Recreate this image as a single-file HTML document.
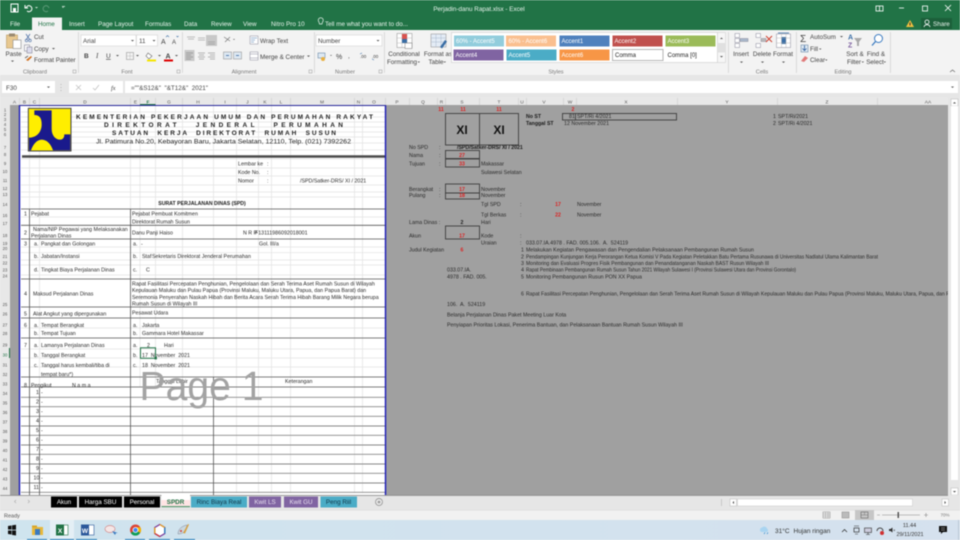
<!DOCTYPE html>
<html><head><meta charset="utf-8"><title>Perjadin-danu Rapat.xlsx - Excel</title>
<style>
html,body{margin:0;padding:0;width:960px;height:540px;overflow:hidden;background:#f3f3f3}
svg{display:block;position:absolute;left:0;top:0;filter:blur(.4px)}
text{font-family:"Liberation Sans",sans-serif;white-space:pre}
.r{font-size:6.3px;fill:#444}
.g{font-size:5.6px;fill:#777;text-anchor:middle}
.w{font-size:6.3px;fill:#e8f3ec}
.c{font-size:4.8px;fill:#555;text-anchor:middle}
.h{font-size:4.2px;fill:#555;text-anchor:middle}
.t{font-size:5.3px;fill:#2a2a2a}
.b{font-size:5.2px;fill:#1a1a1a;font-weight:bold}
.x{font-size:5.2px;fill:#d22;font-weight:bold;text-anchor:middle}
.s{font-size:6px;fill:#fff}
.e{font-size:6.5px;font-weight:bold;fill:#222;}
.m{text-anchor:middle}
</style></head><body>
<svg width="960" height="540" viewBox="0 0 960 540" xmlns="http://www.w3.org/2000/svg">
<!-- title bar -->
<rect width="960" height="30" fill="#217346"/>
<rect x="11" y="4" width="7" height="8" fill="none" stroke="#fff" stroke-width="1"/><rect x="13" y="8" width="3" height="4" fill="#fff"/>
<path d="M26 8a3 3 0 1 1 1 3M25 5v3h3" fill="none" stroke="#fff" stroke-width="1"/><path d="M35 7h3l-1.500 1.500z" fill="#cfe3d6"/>
<path d="M49 8a3 3 0 1 0-1 3" fill="none" stroke="#5d9a78" stroke-width="1"/><path d="M62 7h2l-1 1z" fill="#cfe3d6"/>
<rect x="62" y="6" width="3" height=".8" fill="#cfe3d6"/>
<text class="w m" x="479" y="11">Perjadin-danu Rapat.xlsx - Excel</text>
<rect x="876" y="6" width="7" height="5" fill="none" stroke="#fff" stroke-width=".8"/><path d="M879.500 6v5" stroke="#fff" stroke-width=".8"/>
<path d="M899 8h5" stroke="#fff" stroke-width=".8"/>
<rect x="922.500" y="6" width="5" height="5" fill="none" stroke="#fff" stroke-width=".8"/>
<path d="M945 5l6 6M951 5l-6 6" stroke="#fff" stroke-width=".8"/>
<!-- tabs -->
<rect x="32" y="17.500" width="30" height="13" fill="#f3f3f3"/>
<text class="w" x="10" y="26">File</text>
<text class="r" x="38" y="26" style="fill:#217346">Home</text>
<text class="w" x="69" y="26">Insert</text>
<text class="w" x="98" y="26">Page Layout</text>
<text class="w" x="145" y="26">Formulas</text>
<text class="w" x="184" y="26">Data</text>
<text class="w" x="211" y="26">Review</text>
<text class="w" x="243" y="26">View</text>
<text class="w" x="271" y="26">Nitro Pro 10</text>
<path d="M319 22a2.500 2.500 0 1 1 3.500 0l-.5 2h-2.500z" fill="none" stroke="#e8f3ec" stroke-width=".7"/>
<text class="w" x="325" y="26">Tell me what you want to do...</text>
<path d="M910 20l4 7h-8z" fill="#f0c040"/><rect x="909.500" y="22.500" width="1" height="3" fill="#333"/>
<rect x="921" y="18" width="31" height="11" fill="#1c5f3a"/>
<circle cx="927" cy="22" r="2" fill="none" stroke="#fff" stroke-width=".8"/><path d="M924 27c.5-3 5.500-3 6 0" fill="none" stroke="#fff" stroke-width=".8"/>
<text class="w" x="933" y="26">Share</text>
<!-- ribbon -->
<rect y="30" width="960" height="45" fill="#f3f3f3"/>
<g fill="#d4d4d4"><rect x="78" y="32" width=".8" height="41"/><rect x="182" y="32" width=".8" height="41"/><rect x="314" y="32" width=".8" height="41"/><rect x="384" y="32" width=".8" height="41"/><rect x="728" y="32" width=".8" height="41"/><rect x="796" y="32" width=".8" height="41"/><rect x="890" y="32" width=".8" height="41"/></g>
<!-- clipboard -->
<rect x="6.500" y="35" width="11" height="13" fill="#e8c890" stroke="#b89860" stroke-width=".6"/><rect x="9" y="33.500" width="6" height="3" fill="#9a8a70"/><rect x="13" y="40" width="8" height="8.500" fill="#fff" stroke="#888" stroke-width=".6"/>
<text class="r" x="5.500" y="56">Paste</text><path d="M11 60.500h3l-1.500 1.500z" fill="#555"/>
<path d="M26 34l4 6M30 34l-4 6" stroke="#5577aa" stroke-width=".8"/><circle cx="26.500" cy="40.500" r="1.300" fill="none" stroke="#5577aa" stroke-width=".6"/><circle cx="30" cy="40.500" r="1.300" fill="none" stroke="#5577aa" stroke-width=".6"/>
<text class="r" x="34" y="39">Cut</text>
<rect x="24.500" y="45" width="5" height="6" fill="#fff" stroke="#889" stroke-width=".6"/><rect x="27" y="47" width="5" height="6" fill="#dde" stroke="#889" stroke-width=".6"/>
<text class="r" x="34" y="51">Copy</text><path d="M52 48h3l-1.500 1.500z" fill="#555"/>
<path d="M26 60l5-4 1 1-4 4z" fill="#d07020"/><path d="M25 58l3-2" stroke="#666" stroke-width="1"/>
<text class="r" x="34" y="62">Format Painter</text>
<text class="g" x="35" y="73.500">Clipboard</text><rect x="73" y="70" width="3" height="3" fill="none" stroke="#999" stroke-width=".5"/>
<!-- font -->
<rect x="81" y="35" width="55" height="11" fill="#fff" stroke="#ccc" stroke-width=".5"/><rect x="136.500" y="35" width="21" height="11" fill="#fff" stroke="#ccc" stroke-width=".5"/>
<text class="r" x="83" y="43">Arial</text><text class="r" x="139" y="43">11</text>
<path d="M131 40h3l-1.500 1.500zM152.500 40h3l-1.500 1.500z" fill="#555"/>
<text class="r" x="161" y="44" style="font-size:7px">A</text><text class="r" x="172" y="44" style="font-size:6px">A</text>
<path d="M166 37l1.500-1.500 1.500 1.500" fill="none" stroke="#3a6ea5" stroke-width=".6"/><path d="M176.500 36l1 1 1-1" fill="none" stroke="#3a6ea5" stroke-width=".6"/>
<text class="r" x="84" y="58" style="font-weight:bold;font-size:6.500px">B</text>
<text class="r" x="96" y="58" style="font-style:italic;font-family:'Liberation Serif';font-size:7px">I</text>
<text class="r" x="106" y="58" style="font-size:6.500px;text-decoration:underline">U</text>
<path d="M116 55h3l-1.500 1.500z" fill="#555"/>
<rect x="126.500" y="52.500" width="7" height="7" fill="none" stroke="#999" stroke-width=".6"/><path d="M130 52.500v7M126.500 56h7" stroke="#bbb" stroke-width=".5"/>
<path d="M136 55h3l-1.500 1.500z" fill="#555"/>
<path d="M148 53l4 3-3 3-3-3z" fill="#fff" stroke="#666" stroke-width=".6"/><rect x="147" y="59.500" width="9" height="2" fill="#f5e500"/><path d="M158 55h3l-1.500 1.500z" fill="#555"/>
<text class="r" x="165.500" y="58.500" style="font-size:7px;font-weight:bold">A</text><rect x="164" y="59.500" width="9" height="2" fill="#d00"/><path d="M175 55h3l-1.500 1.500z" fill="#555"/>
<text class="g" x="127" y="73.500">Font</text><rect x="177" y="70" width="3" height="3" fill="none" stroke="#999" stroke-width=".5"/>
<!-- alignment -->
<rect x="206" y="35" width="11" height="11" fill="#c8c8c8"/>
<path d="M187 37h8M188 39h6M198 38h7M198 40h7M208 42h7M208 44h7" stroke="#888" stroke-width=".6"/>
<rect x="184.500" y="50" width="10" height="11" fill="#c8c8c8"/>
<path d="M186 53h7M186 55h5M186 57h7M186 59h5M198 53h7M199 55h5M198 57h7M199 59h5M208 53h7M210 55h5M208 57h7M210 59h5" stroke="#777" stroke-width=".6"/>
<path d="M224 37l6 4M225 42l5-5" stroke="#777" stroke-width=".7"/><path d="M233 39h2l-1 1z" fill="#555"/>
<rect x="223.500" y="52" width="8" height="7" fill="#dde8f2" stroke="#888" stroke-width=".5"/><rect x="233.500" y="52" width="8" height="7" fill="#dde8f2" stroke="#888" stroke-width=".5"/><path d="M229 55.500h-3M236 55.500h3" stroke="#2a5a9a" stroke-width=".8"/>
<rect x="250" y="36" width="8" height="8" fill="#fff" stroke="#889" stroke-width=".5"/><path d="M251 38h6M251 40h4M251 42h3" stroke="#4477aa" stroke-width=".6"/>
<text class="r" x="260" y="43">Wrap Text</text>
<rect x="250" y="52" width="8" height="8" fill="#fff" stroke="#889" stroke-width=".5"/><path d="M250 54h8M250 58h8" stroke="#889" stroke-width=".5"/>
<text class="r" x="260" y="59">Merge &amp; Center</text><path d="M307 55.500h3l-1.500 1.500z" fill="#555"/>
<text class="g" x="244" y="73.500">Alignment</text><rect x="309" y="70" width="3" height="3" fill="none" stroke="#999" stroke-width=".5"/>
<!-- number -->
<rect x="316" y="35" width="66" height="11" fill="#fff" stroke="#ccc" stroke-width=".5"/>
<text class="r" x="318" y="43">Number</text><path d="M376.500 40h3l-1.500 1.500z" fill="#555"/>
<rect x="318" y="53" width="7" height="5" fill="#dde8f2" stroke="#579" stroke-width=".5"/><circle cx="323" cy="59" r="2" fill="#e8b040"/><path d="M330 55h2l-1 1z" fill="#555"/>
<text class="r" x="336" y="59" style="font-size:7px">%</text><text class="r" x="348" y="58">,</text>
<text class="r" x="360" y="58" style="font-size:4.500px">.00</text><text class="r" x="372" y="58" style="font-size:4.500px">.00</text>
<path d="M360 54l2-1M372 59l2 1" stroke="#4477aa" stroke-width=".6"/>
<text class="g" x="345" y="73.500">Number</text><rect x="379" y="70" width="3" height="3" fill="none" stroke="#999" stroke-width=".5"/>
<!-- conditional -->
<rect x="397" y="33.500" width="15" height="14" fill="#fff" stroke="#8a8a8a" stroke-width=".5"/><path d="M397 38h15M397 43h15M402 34v14M407 34v14" stroke="#bbb" stroke-width=".5"/><rect x="402" y="34" width="5" height="5" fill="#d9534f"/><rect x="402" y="39" width="5" height="4" fill="#3a6ea5"/><rect x="405" y="43" width="7" height="5.500" fill="#fff" stroke="#777" stroke-width=".5"/>
<text class="r m" x="404" y="56">Conditional</text><text class="r m" x="402" y="64">Formatting</text><path d="M417.500 61.500h2.500l-1.200 1.300z" fill="#555"/>
<rect x="431" y="34" width="15" height="13" fill="#e4ecf6" stroke="#8a8a8a" stroke-width=".5"/><path d="M431 38h15M431 42h15M436 34v13M441 34v13" stroke="#a9b9cc" stroke-width=".5"/><path d="M440 47l5-7 2 1.500-5 7z" fill="#3a6ea5"/>
<text class="r m" x="438" y="56">Format as</text><text class="r m" x="436" y="64">Table</text><path d="M443.500 61.500h2.500l-1.200 1.300z" fill="#555"/>
<!-- gallery -->
<rect x="451.500" y="32.500" width="266" height="30" fill="#fff" stroke="#ccc" stroke-width=".6"/>
<rect x="454" y="35.500" width="50" height="11" fill="#92cddc"/><text class="s" x="456" y="43">60% - Accent5</text>
<rect x="506" y="35.500" width="50" height="11" fill="#fabf8f"/><text class="s" x="508.500" y="43">60% - Accent6</text>
<rect x="559.500" y="35.500" width="50" height="11" fill="#4f81bd"/><text class="s" x="561.500" y="43">Accent1</text>
<rect x="612.500" y="35.500" width="50" height="11" fill="#c0504d"/><text class="s" x="614.500" y="43">Accent2</text>
<rect x="665.500" y="35.500" width="50" height="11" fill="#9bbb59"/><text class="s" x="667.500" y="43">Accent3</text>
<rect x="453.500" y="49.500" width="50" height="11" fill="#8064a2"/><text class="s" x="455.500" y="57">Accent4</text>
<rect x="506.500" y="49.500" width="50" height="11" fill="#4bacc6"/><text class="s" x="508.500" y="57">Accent5</text>
<rect x="559.500" y="49.500" width="50" height="11" fill="#f79646"/><text class="s" x="561.500" y="57">Accent6</text>
<rect x="612.500" y="49.500" width="50.500" height="11" fill="#fff" stroke="#b5b5b5" stroke-width="1"/><text class="s" x="615" y="57" style="fill:#222">Comma</text>
<text class="s" x="667.500" y="57" style="fill:#222">Comma [0]</text>
<rect x="717.500" y="32.500" width="8" height="30" fill="#f6f6f6" stroke="#ccc" stroke-width=".5"/><rect x="718" y="43" width="7" height="9.500" fill="#e0e0e0"/>
<path d="M720 39l1.500-1.500 1.500 1.500zM720 56h3l-1.500 1.500z" fill="#555"/>
<text class="g" x="556" y="73.500">Styles</text>
<!-- cells -->
<g stroke="#889" stroke-width=".5" fill="#fff"><rect x="735" y="33.500" width="4.500" height="4"/><rect x="735" y="38.500" width="4.500" height="4"/><rect x="735" y="43.500" width="4.500" height="4"/><rect x="740" y="38.500" width="8" height="3" fill="#a9b9cc"/>
<rect x="756" y="33.500" width="4.500" height="4"/><rect x="756" y="43.500" width="4.500" height="4"/><rect x="761" y="38.500" width="5" height="3" fill="#bbb"/>
<rect x="776.500" y="34" width="14" height="13.500"/></g>
<path d="M766 36l6 6M772 36l-6 6" stroke="#d04030" stroke-width="1"/>
<rect x="781.500" y="37" width="4.500" height="7" fill="#3a6ea5"/><path d="M776.500 38h14M776.500 43h14M781.500 34v13.500M786 34v13.500" stroke="#aaa" stroke-width=".4"/><path d="M778 33h11" stroke="#3a6ea5" stroke-width=".8"/>
<text class="r m" x="741" y="56">Insert</text><text class="r m" x="762" y="56">Delete</text><text class="r m" x="783" y="56">Format</text>
<path d="M740 61.500h3l-1.500 1.500zM761 61.500h3l-1.500 1.500zM782 61.500h3l-1.500 1.500z" fill="#555"/>
<text class="g" x="762" y="73.500">Cells</text>
<!-- editing -->
<text x="800" y="42" style="font-size:10px;fill:#444">Σ</text><text class="r" x="810" y="39">AutoSum</text><path d="M840 36h3l-1.500 1.500z" fill="#555"/>
<rect x="801" y="45" width="7" height="7" fill="#dde8f2" stroke="#579" stroke-width=".5"/><path d="M804.500 45.500v5M802.500 48.500l2 2 2-2" fill="none" stroke="#2a5a9a" stroke-width=".8"/><text class="r" x="810" y="51">Fill</text><path d="M819 48.500h2.500l-1.200 1.300z" fill="#555"/>
<path d="M801 61l4-5 3 2-4 4z" fill="#e07a7a"/><text class="r" x="810" y="62">Clear</text><path d="M825 59.500h2.500l-1.200 1.300z" fill="#555"/>
<text x="848" y="39.500" style="font-size:7px;fill:#3a6ea5;font-weight:bold">A</text><text x="848" y="47.500" style="font-size:7px;fill:#8064a2;font-weight:bold">Z</text><path d="M854 38h8l-3 4v4h-2v-4z" fill="#aaa"/>
<circle cx="878.500" cy="38.500" r="4" fill="#fff" stroke="#3a7ac0" stroke-width="1"/><path d="M875.500 41.500l-3.500 4" stroke="#3a7ac0" stroke-width="1.300"/>
<text class="r m" x="855" y="56">Sort &amp;</text><text class="r m" x="854" y="64">Filter</text><path d="M861.500 61.500h2.500l-1.200 1.300z" fill="#555"/>
<text class="r m" x="876" y="56">Find &amp;</text><text class="r m" x="875" y="64">Select</text><path d="M883.500 61.500h2.500l-1.200 1.300z" fill="#555"/>
<text class="g" x="843" y="73.500">Editing</text>
<path d="M950 72l2.500-2 2.500 2" fill="none" stroke="#666" stroke-width=".7"/>
<!-- formula bar -->
<rect y="75" width="960" height="22" fill="#e6e6e6"/>
<rect x="2" y="81" width="53" height="12" fill="#fff"/>
<text class="r" x="6" y="90">F30</text><path d="M47 86.500h3l-1.500 1.500z" fill="#555"/>
<path d="M61 84v1M61 87v1M61 90v1" stroke="#aaa" stroke-width=".7"/>
<rect x="69" y="81" width="54" height="12" fill="#fff"/>
<path d="M76 85l5 5M81 85l-5 5" stroke="#bbb" stroke-width=".7"/><path d="M93 88l2 2 4-5" fill="none" stroke="#bbb" stroke-width=".7"/>
<text class="r" x="111" y="90" style="font-style:italic;font-family:'Liberation Serif'">fx</text>
<rect x="125" y="81" width="833" height="12" fill="#fff"/>
<text class="r" x="131" y="90">=""&amp;S12&amp;"  "&amp;T12&amp;"  2021"</text>
<path d="M951 86.500h3l-1.500 1.500z" fill="#555"/>
<!-- column headers -->
<rect y="97" width="960" height="8.500" fill="#e8e8e8"/>
<path d="M19.500 98v7M29.500 98v7M39.500 98v7M130.500 98v7M140 98v7M155.500 98v7M182.500 98v7M213.500 98v7M236.500 98v7M258.500 98v7M271.500 98v7M290.500 98v7M354.500 98v7M362.500 98v7M385.500 98v7M409.500 98v7M437.500 98v7M445.500 98v7M479.500 98v7M518.500 98v7M526.500 98v7M563.500 98v7M576.500 98v7M677.500 98v7M777.500 98v7M877.500 98v7" stroke="#ccc" stroke-width=".6"/>
<rect x="140" y="104" width="15.500" height="1.200" fill="#217346"/>
<g>
<text class="c" x="14.500" y="103.500">A</text><text class="c" x="24.500" y="103.500">B</text><text class="c" x="34.500" y="103.500">C</text><text class="c" x="85" y="103.500">D</text><text class="c" x="135.500" y="103.500">E</text><text class="c" x="148" y="103.500" style="fill:#217346;font-weight:bold">F</text><text class="c" x="169" y="103.500">G</text><text class="c" x="198" y="103.500">H</text><text class="c" x="225" y="103.500">I</text><text class="c" x="247.500" y="103.500">J</text><text class="c" x="265" y="103.500">K</text><text class="c" x="281" y="103.500">L</text><text class="c" x="322" y="103.500">M</text><text class="c" x="358.500" y="103.500">N</text><text class="c" x="374" y="103.500">O</text><text class="c" x="397" y="103.500">P</text><text class="c" x="423" y="103.500">Q</text><text class="c" x="441.500" y="103.500">R</text><text class="c" x="462" y="103.500">S</text><text class="c" x="499" y="103.500">T</text><text class="c" x="522" y="103.500">U</text><text class="c" x="544" y="103.500">V</text><text class="c" x="570" y="103.500">W</text><text class="c" x="626" y="103.500">X</text><text class="c" x="727" y="103.500">Y</text><text class="c" x="827" y="103.500">Z</text><text class="c" x="928" y="103.500">AA</text>
</g>
<!-- sheet -->
<rect x="0" y="105" width="10" height="390" fill="#e8e8e8"/>
<rect x="10" y="105" width="938" height="390" fill="#a0a0a0"/>
<rect x="19" y="105" width="367" height="390" fill="#fff"/>
<!-- row headers -->
<g>
<text class="h" x="5" y="111.500">1</text><text class="h" x="5" y="116">2</text><text class="h" x="5" y="121">3</text><text class="h" x="5" y="126">4</text><text class="h" x="5" y="131">5</text><text class="h" x="5" y="136">6</text><text class="h" x="5" y="149">7</text><text class="h" x="5" y="156">8</text><text class="h" x="5" y="165">9</text><text class="h" x="5" y="173">10</text><text class="h" x="5" y="182">11</text><text class="h" x="5" y="190">12</text><text class="h" x="5" y="196">13</text><text class="h" x="5" y="206">14</text><text class="h" x="5" y="217">16</text><text class="h" x="5" y="225">17</text><text class="h" x="5" y="237">18</text><text class="h" x="5" y="245">19</text><text class="h" x="5" y="250">20</text><text class="h" x="5" y="258">21</text><text class="h" x="5" y="264.500">22</text><text class="h" x="5" y="271.500">23</text><text class="h" x="5" y="277.500">24</text><text class="h" x="5" y="306">25</text><text class="h" x="5" y="315.500">26</text><text class="h" x="5" y="326.500">27</text><text class="h" x="5" y="335">28</text><text class="h" x="5" y="346.500">29</text><text class="h" x="5" y="356.500" style="fill:#217346">30</text><text class="h" x="5" y="366.500">31</text><text class="h" x="5" y="376">32</text><text class="h" x="5" y="385.500">33</text><text class="h" x="5" y="395">34</text><text class="h" x="5" y="404.500">35</text><text class="h" x="5" y="414">36</text><text class="h" x="5" y="423.500">37</text><text class="h" x="5" y="433">38</text><text class="h" x="5" y="442.500">39</text><text class="h" x="5" y="452">40</text><text class="h" x="5" y="461.500">41</text><text class="h" x="5" y="471">42</text><text class="h" x="5" y="480.500">43</text><text class="h" x="5" y="490">44</text>
</g>
<rect x="9" y="348" width="1" height="10" fill="#217346"/>
<!-- light gridlines -->
<path d="M29.500 105v104M39.500 105v282M130.500 105v104M140 105v282M155.500 105v282M182.500 105v388M213.500 105v272M236.500 105v388M258.500 105v388M271.500 105v388M290.500 105v388M354.500 105v388M362.500 105v388M21 112h364M21 117h364M21 122h364M21 127h364M21 132h364M21 137h364M21 143h364M21 150h364M21 159h364M21 168h364M21 176h364M21 185h364M21 192h364M21 197h364M21 217h364M21 247h364M21 252.700h364M21 260h364M21 265h364M21 275h364M21 328h364M21 349h364M21 358h364M21 367h364" stroke="#e2e2e2" stroke-width=".7" fill="none"/>
<!-- dark lines -->
<path d="M22 156.500h363" stroke="#4a4a4a" stroke-width="2.600"/>
<path d="M21 209h364M21 225.300h364M21 239h364M21 279h364M21 307h364M21 318h364M21 338h364M21 377h364M21 387h364" stroke="#555" stroke-width=".8"/>
<path d="M21 397.300h364M21 406.700h364M21 416.300h364M21 426h364M21 435.300h364M21 445h364M21 454.300h364M21 464h364M21 473.300h364M21 483h364M21 492.300h364" stroke="#888" stroke-width=".9"/>
<path d="M29.500 209v286M39.500 387v108M130.500 209v286M213.500 377v118" stroke="#555" stroke-width=".8"/>
<!-- page border -->
<path d="M19.500 105v390M385.500 105v390" stroke="#1a1ab8" stroke-width="1.400"/><rect x="19" y="105" width="367" height="1" fill="#26269a"/>
<!-- logo -->
<g transform="translate(25 105) scale(.3333)">
<rect x="10" y="10" width="128" height="128" fill="#ffee00" stroke="#444" stroke-width="3"/>
<path d="M28 16H80V72C80 92 92 104 104 104C114 104 118 98 118 88H136V136H84C78 118 66 104 50 104C36 104 24 118 18 136H12V98C34 98 50 82 50 58C50 40 44 30 28 30Z" fill="#1a1a8c"/>
</g>
<!-- header text -->
<text class="e" x="76" y="119" textLength="297" lengthAdjust="spacing">KEMENTERIAN PEKERJAAN UMUM DAN PERUMAHAN RAKYAT</text>
<text class="e" x="104" y="127" textLength="239" lengthAdjust="spacing">DIREKTORAT   JENDERAL   PERUMAHAN</text>
<text class="e" x="112" y="135" textLength="224" lengthAdjust="spacing">SATUAN  KERJA  DIREKTORAT  RUMAH  SUSUN</text>
<text x="96" y="143.500" textLength="255" lengthAdjust="spacingAndGlyphs" style="font-size:6.400px;fill:#222">Jl. Patimura No.20, Kebayoran Baru, Jakarta Selatan, 12110, Telp. (021) 7392262</text>
<g>
<text class="t" x="238" y="165.500">Lembar ke</text><text class="t" x="267" y="165.500">:</text>
<text class="t" x="238" y="174">Kode No.</text><text class="t" x="267" y="174">:</text>
<text class="t" x="238" y="182.500">Nomor</text><text class="t" x="267" y="182.500">:</text><text class="t" x="300" y="182.500">/SPD/Satker-DRS/ XI / 2021</text>
<text class="b m" x="202" y="205">SURAT PERJALANAN DINAS (SPD)</text>
<text class="t" x="24" y="215.500">1</text><text class="t" x="31" y="215.500">Pejabat</text><text class="t" x="132" y="215.500">Pejabat Pembuat Komitmen</text><text class="t" x="132" y="223.500">Direktorat Rumah Susun</text>
<text class="t" x="33" y="231">Nama/NIP Pegawai yang Melaksanakan</text><text class="t" x="31" y="237.500">Perjalanan Dinas</text><text class="t" x="24" y="234.500">2</text><text class="t" x="132" y="234.500">Danu Panji Haiso</text><text class="t" x="243" y="234.500">N R P</text><text class="t" x="255" y="234.500">F13111986092018001</text>
<text class="t" x="24" y="245.500">3</text><text class="t" x="34" y="245.500">a.</text><text class="t" x="41" y="245.500">Pangkat dan Golongan</text><text class="t" x="133" y="245.500">a.</text><text class="t" x="141" y="245.500">-</text><text class="t" x="259" y="245.500">Gol.</text><text class="t" x="270" y="245.500">III/a</text>
<text class="t" x="34" y="258">b.</text><text class="t" x="41" y="258">Jabatan/Instansi</text><text class="t" x="133" y="258">b.</text><text class="t" x="142" y="258">Staf</text><text class="t" x="152" y="258">Sekretaris Direktorat Jenderal Perumahan</text>
<text class="t" x="34" y="271.500">d.</text><text class="t" x="41" y="271.500">Tingkat Biaya Perjalanan Dinas</text><text class="t" x="133" y="271.500">c.</text><text class="t" x="146" y="271.500">C</text>
<text class="t" x="24" y="295.500">4</text><text class="t" x="33" y="295.500">Maksud Perjalanan Dinas</text>
<text class="t" x="132" y="285.500">Rapat Fasilitasi Percepatan Penghunian, Pengelolaan dan Serah Terima Aset Rumah Susun di Wilayah</text>
<text class="t" x="132" y="292">Kepulauan Maluku dan Pulau Papua (Provinsi Maluku, Maluku Utara, Papua, dan Papua Barat) dan</text>
<text class="t" x="132" y="299">Seremonia Penyerahan Naskah Hibah dan Berita Acara Serah Terima Hibah Barang Milik Negara berupa</text>
<text class="t" x="132" y="305.500">Rumah Susun di Wilayah III</text>
<text class="t" x="24" y="315.500">5</text><text class="t" x="33" y="315.500">Alat Angkut yang dipergunakan</text><text class="t" x="132" y="314.500">Pesawat Udara</text>
<text class="t" x="24" y="327">6</text><text class="t" x="34" y="327">a.</text><text class="t" x="41" y="327">Tempat Berangkat</text><text class="t" x="133" y="327">a.</text><text class="t" x="142" y="327">Jakarta</text>
<text class="t" x="34" y="335">b.</text><text class="t" x="41" y="335">Tempat Tujuan</text><text class="t" x="133" y="335">b.</text><text class="t" x="142" y="335">Gammara Hotel Makassar</text>
<text class="t" x="24" y="347">7</text><text class="t" x="34" y="347">a.</text><text class="t" x="41" y="347">Lamanya Perjalanan Dinas</text><text class="t" x="133" y="347">a.</text><text class="t" x="147" y="347">2</text><text class="t" x="164" y="347">Hari</text>
<text class="t" x="34" y="357">b.</text><text class="t" x="41" y="357">Tanggal Berangkat</text><text class="t" x="133" y="357">b.</text><text class="t" x="142" y="357">17  November  2021</text>
<text class="t" x="34" y="367">c.</text><text class="t" x="41" y="367">Tanggal harus kembali/tiba di</text><text class="t" x="133" y="367">c.</text><text class="t" x="142" y="367">18  November  2021</text>
<text class="t" x="41" y="376">tempat baru*)</text>
<text class="t" x="24" y="387">8</text><text class="t" x="31" y="387">Pengikut</text><text class="t" x="72" y="387">N a m a</text><text class="t" x="156" y="383">Tanggal Lahir</text><text class="t" x="285" y="383">Keterangan</text>
</g>
<g>
<text class="t" x="36" y="394">1</text><text class="t" x="36" y="403.500">2</text><text class="t" x="36" y="413">3</text><text class="t" x="36" y="422.500">4</text><text class="t" x="36" y="432">5</text><text class="t" x="36" y="441.500">6</text><text class="t" x="36" y="451">7</text><text class="t" x="36" y="460.500">8</text><text class="t" x="36" y="470">9</text><text class="t" x="33.500" y="479.500">10</text><text class="t" x="33.500" y="489">11</text>
<text class="t" x="41" y="394">-</text><text class="t" x="41" y="403.500">-</text><text class="t" x="41" y="413">-</text><text class="t" x="41" y="422.500">-</text><text class="t" x="41" y="432">-</text><text class="t" x="41" y="441.500">-</text><text class="t" x="41" y="451">-</text><text class="t" x="41" y="460.500">-</text><text class="t" x="41" y="470">-</text><text class="t" x="41" y="479.500">-</text><text class="t" x="41" y="489">-</text>
</g>
<!-- watermark -->
<text x="139.500" y="400" textLength="124" lengthAdjust="spacingAndGlyphs" style="font-size:41px;fill:#a3a3a3">Page 1</text>
<!-- selected cell -->
<rect x="140.500" y="347.800" width="15" height="10.500" fill="none" stroke="#217346" stroke-width="1"/><rect x="154.500" y="357" width="2.400" height="2.400" fill="#217346"/>
<!-- right gray content -->
<text class="x" x="441" y="111">11</text><text class="x" x="463" y="111">11</text><text class="x" x="499" y="111">11</text><text class="x" x="573" y="111">2</text>
<g fill="none" stroke="#3e3e3e" stroke-width=".9">
<rect x="445.500" y="113.500" width="73" height="31.500"/><path d="M479.500 113.500v31.500"/>
<rect x="562.500" y="113.500" width="114" height="6.500"/><path d="M575.500 113.500v6.500"/>
<rect x="445.500" y="150.500" width="34" height="8"/><rect x="445.500" y="159" width="34" height="8"/>
<rect x="445.500" y="184" width="34" height="9"/><rect x="445.500" y="193" width="34" height="6"/>
<rect x="445.500" y="226" width="34" height="13"/>
</g>
<text x="462" y="134" class="m" style="font-size:12px;font-weight:bold;fill:#111">XI</text><text x="499" y="134" class="m" style="font-size:12px;font-weight:bold;fill:#111">XI</text>
<text class="b" x="526" y="118">No ST</text><text class="b" x="526" y="125">Tanggal ST</text>
<text class="t" x="569" y="118">81</text><text class="t" x="577" y="118">SPT/Ri 4/2021</text><text class="t" x="564" y="125">12 November 2021</text>
<text class="t" x="409" y="149">No SPD</text><text class="t" x="439" y="149">:</text><text class="b" x="457" y="149">/SPD/Satker-DRS/ XI / 2021</text>
<text class="t" x="409" y="157">Nama</text><text class="t" x="439" y="157">:</text><text class="x" x="462" y="157">27</text>
<text class="t" x="409" y="165.500">Tujuan</text><text class="t" x="439" y="165.500">:</text><text class="x" x="462" y="165.500">33</text><text class="t" x="481" y="165.500">Makassar</text><text class="t" x="481" y="174">Sulawesi Selatan</text>
<text class="t" x="409" y="191">Berangkat</text><text class="t" x="439" y="191">:</text><text class="x" x="462" y="191">17</text><text class="t" x="481" y="191">November</text>
<text class="t" x="409" y="197">Pulang</text><text class="t" x="439" y="197">:</text><text class="x" x="462" y="197">18</text><text class="t" x="481" y="197">November</text>
<text class="t" x="481" y="206">Tgl SPD</text><text class="t" x="520" y="206">:</text><text class="x" x="558" y="206">17</text><text class="t" x="577" y="206">November</text>
<text class="t" x="481" y="216.500">Tgl Berkas</text><text class="t" x="520" y="216.500">:</text><text class="x" x="558" y="216.500">22</text><text class="t" x="577" y="216.500">November</text>
<text class="t" x="409" y="224">Lama Dinas :</text><text class="b m" x="462" y="224">2</text><text class="t" x="481" y="224">Hari</text>
<text class="t" x="409" y="237.500">Akun</text><text class="x" x="462" y="237.500">17</text><text class="t" x="481" y="237.500">Kode</text><text class="t" x="520" y="237.500">:</text>
<text class="t" x="481" y="244.500">Uraian</text><text class="t" x="520" y="244.500">:</text><text class="t" x="526" y="244.500">033.07.IA.4978 . FAD. 005.106.  A.  524119</text>
<text class="t" x="409" y="251.500">Judul Kegiatan</text><text class="x" x="462" y="251.500">6</text>
<text class="t" x="521" y="251.500">1</text><text class="t" x="526" y="251.500" textLength="228" lengthAdjust="spacingAndGlyphs">Melakukan Kegiatan Pengawasan dan Pengendalian Pelaksanaan Pembangunan Rumah Susun</text>
<text class="t" x="521" y="258.500">2</text><text class="t" x="526" y="258.500" textLength="352" lengthAdjust="spacingAndGlyphs">Pendampingan Kunjungan Kerja Perorangan Ketua Komisi V Pada Kegiatan Peletakkan Batu Pertama Rusunawa di Universitas Nadlatul Ulama Kalimantan Barat</text>
<text class="t" x="521" y="265">3</text><text class="t" x="526" y="265" textLength="243" lengthAdjust="spacingAndGlyphs">Monitoring dan Evaluasi Progres Fisik Pembangunan dan Penandatanganan Naskah BAST Rusun Wilayah III</text>
<text class="t" x="447" y="271.500">033.07.IA.</text><text class="t" x="521" y="271.500">4</text><text class="t" x="526" y="271.500" textLength="270" lengthAdjust="spacingAndGlyphs">Rapat Pembinaan Pembangunan Rumah Susun Tahun 2021 Wilayah Sulawesi I (Provinsi Sulawesi Utara dan Provinsi Gorontalo)</text>
<text class="t" x="447" y="278.500">4978 . FAD. 005.</text><text class="t" x="521" y="278.500">5</text><text class="t" x="526" y="278.500" textLength="116" lengthAdjust="spacingAndGlyphs">Monitoring Pembangunan Rusun PON XX Papua</text>
<text class="t" x="521" y="295.500">6</text><text class="t" x="526" y="295.500" style="font-size:5.100px">Rapat Fasilitasi Percepatan Penghunian, Pengelolaan dan Serah Terima Aset Rumah Susun di Wilayah Kepulauan Maluku dan Pulau Papua (Provinsi Maluku, Maluku Utara, Papua, dan Papua Barat) dan</text>
<text class="t" x="447" y="306">106.  A.  524119</text>
<text class="t" x="447" y="316.500">Belanja Perjalanan Dinas Paket Meeting Luar Kota</text>
<text class="t" x="447" y="326.500">Penyiapan Prioritas Lokasi, Penerima Bantuan, dan Pelaksanaan Bantuan Rumah Susun Wilayah III</text>
<text class="t" x="773" y="118">1</text><text class="t" x="778" y="118">SPT/Ri/2021</text><text class="t" x="773" y="125">2</text><text class="t" x="778" y="125">SPT/Ri 4/2021</text>
<!-- v scrollbar -->
<rect x="948" y="97" width="12" height="398" fill="#e6e6e6"/>
<rect x="951" y="99" width="7" height="7" fill="#fff" stroke="#aaa" stroke-width=".4"/><rect x="951" y="106" width="7" height="374" fill="#fff"/><rect x="951" y="488" width="7" height="7" fill="#fff" stroke="#aaa" stroke-width=".4"/>
<path d="M953 103.500l1.500-1.500 1.500 1.500zM953 491h3l-1.500 1.500z" fill="#444"/>
<!-- sheet tabs -->
<rect y="495" width="960" height="15" fill="#e6e6e6"/>
<rect y="495" width="948" height=".8" fill="#888"/>
<path d="M16 500l-1.500 1.500 1.500 1.500M28 500l1.500 1.500-1.500 1.500" fill="none" stroke="#aaa" stroke-width=".6"/>
<g>
<rect x="51" y="496.500" width="26" height="11" fill="#000"/><text x="64" y="504" class="s m" style="font-size:6.300px">Akun</text>
<rect x="79" y="496.500" width="43" height="11" fill="#000"/><text x="100.500" y="504" class="s m" style="font-size:6.300px">Harga SBU</text>
<rect x="124" y="496.500" width="36" height="11" fill="#000"/><text x="142" y="504" class="s m" style="font-size:6.300px">Personal</text>
<rect x="161.500" y="495" width="28.500" height="11" fill="#ffe4e4"/><rect x="161.500" y="506" width="28.500" height="1.200" fill="#5a9a72"/><rect x="161.500" y="495" width="28.500" height="5" fill="#fff"/>
<text x="175.500" y="504" class="s m" style="font-size:6.300px;fill:#217346;font-weight:bold">SPDR</text>
<rect x="191" y="496.500" width="56" height="11" fill="#4bacc6"/><text x="219" y="504" class="s m" style="font-size:6.300px;fill:#12384a">Rinc Biaya Real</text>
<rect x="249" y="496.500" width="32" height="11" fill="#8064a2"/><text x="265" y="504" class="s m" style="font-size:6.300px;fill:#e8e0f0">Kwit LS</text>
<rect x="284" y="496.500" width="34" height="11" fill="#8064a2"/><text x="301" y="504" class="s m" style="font-size:6.300px;fill:#e8e0f0">Kwit GU</text>
<rect x="320.500" y="496.500" width="36.500" height="11" fill="#4bacc6"/><text x="338.500" y="504" class="s m" style="font-size:6.300px;fill:#12384a">Peng Riil</text>
</g>
<circle cx="379" cy="502" r="3.500" fill="none" stroke="#8a8a8a" stroke-width=".7"/><circle cx="379" cy="502" r="1.300" fill="#999"/>
<path d="M721.500 499v7" stroke="#bbb" stroke-width=".7"/>
<rect x="730" y="499" width="6.500" height="7" fill="#fff" stroke="#aaa" stroke-width=".4"/><rect x="737.500" y="499" width="175" height="7" fill="#fff" stroke="#bbb" stroke-width=".4"/><rect x="942" y="499" width="6.500" height="7" fill="#fff" stroke="#aaa" stroke-width=".4"/>
<path d="M734 501l-1.500 1.500 1.500 1.500zM944.500 501l1.500 1.500-1.500 1.500z" fill="#444"/>
<!-- status bar -->
<rect y="510" width="960" height="10" fill="#f1f1f1"/><rect y="510" width="960" height=".5" fill="#d8d8d8"/>
<text x="4" y="517.500" style="font-size:5.500px;fill:#555">Ready</text>
<rect x="855" y="510" width="19" height="10" fill="#c6c6c6"/>
<rect x="823" y="512" width="7" height="6" fill="none" stroke="#888" stroke-width=".5"/><path d="M823 514h7M823 516h7M825.500 512v6M828 512v6" stroke="#888" stroke-width=".4"/>
<rect x="842" y="512" width="7" height="6" fill="#bbb" stroke="#888" stroke-width=".5"/>
<rect x="861" y="512" width="7" height="6" fill="none" stroke="#666" stroke-width=".6"/><path d="M864.500 512v3M861 515h7" stroke="#666" stroke-width=".4"/>
<path d="M877 515h3M882 515h38M924 515h4M926 513v4" stroke="#888" stroke-width=".6"/><rect x="897.500" y="512" width="1.500" height="6" fill="#555"/>
<text x="945" y="516.500" class="m" style="font-size:4.500px;fill:#777">70%</text>
<!-- taskbar -->
<defs><linearGradient id="tb" x1="0" x2="1"><stop offset="0" stop-color="#cfe4ee"/><stop offset="1" stop-color="#d5e1ee"/></linearGradient></defs>
<rect y="520" width="960" height="20" fill="url(#tb)"/>
<rect x="50" y="520" width="24" height="20" fill="#e4eff5"/>
<g fill="#1f7ab8"><rect x="27" y="539" width="20" height="1"/><rect x="50" y="539" width="24" height="1"/><rect x="76" y="539" width="21" height="1"/><rect x="125" y="539" width="20" height="1"/><rect x="149" y="539" width="21" height="1"/><rect x="174" y="539" width="21" height="1"/></g>
<path d="M8 526l3.500-.5v4h-3.500zM12 525.400l4-.6v5h-4zM8 530.500h3.500v4l-3.500-.5zM12 530.500h4v5l-4-.6z" fill="#111"/>
<rect x="32" y="527" width="11" height="8" fill="#e8b83a"/><rect x="32" y="525.500" width="5" height="2" fill="#d8a62a"/><rect x="35" y="529" width="5" height="6" fill="#3a7ac0"/>
<rect x="57" y="525" width="11" height="10" fill="#fff" stroke="#217346" stroke-width=".6"/><rect x="56" y="524.500" width="8" height="11" fill="#217346"/><text x="60" y="533" class="m" style="font-size:6.500px;fill:#fff;font-weight:bold">X</text>
<rect x="85" y="525" width="9" height="10" fill="#fff" stroke="#2b579a" stroke-width=".6"/><rect x="81" y="524.500" width="8" height="11" fill="#2b579a"/><text x="85" y="533" class="m" style="font-size:6.500px;fill:#fff;font-weight:bold">W</text>
<ellipse cx="110" cy="529" rx="5" ry="3.500" fill="#f4e6e6" stroke="#d08a8a" stroke-width=".7"/><path d="M112 531l3 4 1-2 2 0z" fill="#3a7ac0"/>
<circle cx="135.500" cy="530" r="5.500" fill="#db4437"/><path d="M135.500 530l-4.800 3a5.500 5.500 0 0 0 9.500-.2z" fill="#0f9d58"/><path d="M135.500 530l4.800 2.800a5.500 5.500 0 0 0 0-5.600h-4.800z" fill="#f4b400"/><circle cx="135.500" cy="530" r="2.500" fill="#4285f4" stroke="#fff" stroke-width=".8"/>
<path d="M159.800 524.500l5 3v6l-5 3-5-3v-6z" fill="#fff" stroke="#7a3a9a" stroke-width="1.300"/><path d="M159.800 524.500l5 3M154.800 527.500l0 6" stroke="#e8a020" stroke-width="1.300"/><path d="M154.800 533.500l5 3" stroke="#d03030" stroke-width="1.300"/><path d="M164.800 527.500v6" stroke="#2a80c0" stroke-width="1.300"/>
<path d="M178 534c0-5 4-8 9-9-1 5-3 9-9 9z" fill="#c8d8e0" stroke="#889" stroke-width=".5"/><path d="M183 533l5-9 1 .5-4 9z" fill="#d8a040"/><circle cx="181" cy="531" r="1" fill="#d04040"/>
<!-- taskbar right -->
<path d="M761 532a2.500 2.500 0 0 1 1-4.500 3 3 0 0 1 5 1 2 2 0 0 1 0 3.500z" fill="#a9d4f0"/><path d="M764 534l1-1.500M767 534l1-1.500" stroke="#3a90d0" stroke-width=".7"/>
<text x="775" y="533" style="font-size:6.500px;fill:#333">31°C</text><text x="793.500" y="533" style="font-size:6.500px;fill:#333">Hujan ringan</text>
<path d="M842 532l2.500-2.500 2.500 2.500" fill="none" stroke="#222" stroke-width=".7"/>
<rect x="854" y="528" width="5" height="4" fill="none" stroke="#333" stroke-width=".7"/><path d="M854 526h5M855 534h3" stroke="#333" stroke-width=".6"/>
<rect x="864.500" y="528" width="7" height="4.500" fill="#ccd" stroke="#333" stroke-width=".6"/><path d="M868 532.500v2M866 534.500h4" stroke="#333" stroke-width=".6"/>
<path d="M877 531a3 3 0 0 1 6 0" fill="none" stroke="#444" stroke-width="1"/><circle cx="882" cy="533" r="2" fill="#d03030"/>
<path d="M889 529h1.500l2-1.500v5l-2-1.500h-1.500z" fill="#333"/><path d="M893.500 529.500l1.500 1.500M895 529.500l-1.500 1.500" stroke="#333" stroke-width=".5"/>
<text x="909.500" y="527" class="m" style="font-size:5.500px;fill:#333">11.44</text><text x="910" y="536" class="m" style="font-size:5.500px;fill:#333">29/11/2021</text>
<path d="M939 526h8v6h-4l-2 2v-2h-2z" fill="#111"/><path d="M941 528h4M941 530h4" stroke="#ddd" stroke-width=".5"/>
<rect x="958" y="520" width="1" height="20" fill="#bcc9d6"/>
</svg>
</body></html>
